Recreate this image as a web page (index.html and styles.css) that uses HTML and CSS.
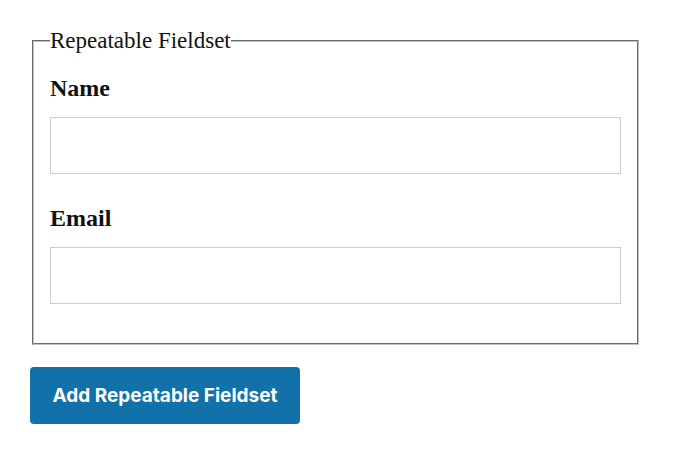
FILE: index.html
```html
<!DOCTYPE html>
<html lang="en">
<head>
<meta charset="utf-8">
<title>Repeatable Fieldset</title>
<link rel="stylesheet" href="styles.css">
</head>
<body>
<div class="page">
  <fieldset class="group">
    <legend class="group-title">Repeatable Fieldset</legend>
    <div class="field">
      <label class="field-label" for="name">Name</label>
      <input class="field-input" id="name" type="text">
    </div>
    <div class="field">
      <label class="field-label" for="email">Email</label>
      <input class="field-input" id="email" type="email">
    </div>
  </fieldset>
  <button class="add-btn" type="button">Add Repeatable Fieldset</button>
</div>
</body>
</html>
```
FILE: styles.css
```css
html, body {
  margin: 0;
  padding: 0;
  background: #fff;
}
.page {
  padding: 29px 40px 0 30px;
  font-family: "Liberation Serif", "Times New Roman", serif;
  color: #111;
}
.group {
  margin: 0 2px;
  padding: 22px 16px 8px;
  border: 2px groove #c0c0c0;
  min-width: 0;
}
.group-title {
  padding: 0;
  font-size: 23px;
  line-height: 24px;
}
.field {
  margin-bottom: 31px;
}
.field-label {
  display: block;
  font-size: 24px;
  line-height: 26px;
  font-weight: bold;
  margin-bottom: 16px;
}
.field-input {
  display: block;
  box-sizing: border-box;
  width: 100%;
  height: 57px;
  margin: 0;
  border: 1px solid #cccccc;
  background: #fff;
  padding: 0 10px;
  font-size: 18px;
}
.add-btn {
  display: block;
  margin-top: 22px;
  height: 57px;
  width: 270px;
  padding: 0;
  border: 0;
  border-radius: 4px;
  background: #1271a8;
  color: #fff;
  font-family: Inter, "Liberation Sans", sans-serif;
  font-size: 19px;
  font-weight: 700;
}
```
